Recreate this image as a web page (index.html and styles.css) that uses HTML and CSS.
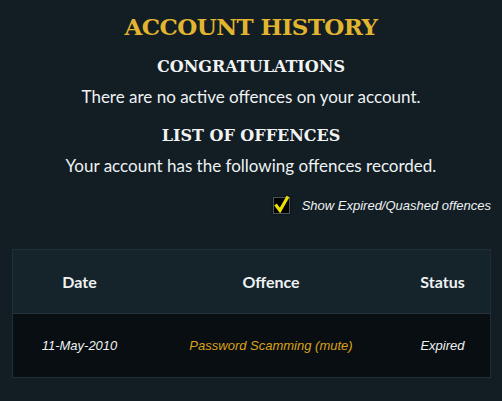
FILE: index.html
```html
<!DOCTYPE html>
<html>
<head>
<meta charset="utf-8">
<link rel="stylesheet" href="styles.css">
</head>
<body>
<main class="page">
  <h1 class="title">Account History</h1>
  <h2 class="subtitle">Congratulations</h2>
  <p class="text">There are no active offences on your account.</p>
  <h2 class="subtitle second">List of Offences</h2>
  <p class="text">Your account has the following offences recorded.</p>
  <label class="toggle">
    <span class="box">
      <svg width="18" height="18" viewBox="0 0 18 18"><path d="M2.5 9.5 L7 15.5 L15 1.5" fill="none" stroke="#e8e000" stroke-width="3.2" stroke-linejoin="miter"/></svg>
    </span>
    <span class="toggle-label">Show Expired/Quashed offences</span>
  </label>
  <table class="offences">
    <thead>
      <tr><th class="c-date">Date</th><th class="c-off">Offence</th><th class="c-stat">Status</th></tr>
    </thead>
    <tbody>
      <tr><td>11-May-2010</td><td class="offence">Password Scamming (mute)</td><td>Expired</td></tr>
    </tbody>
  </table>
</main>
</body>
</html>
```
FILE: styles.css
```css
html, body {
  margin: 0;
  padding: 0;
  background: #121d24;
}
.page {
  width: 502px;
  height: 401px;
  box-sizing: border-box;
  padding-top: 11px;
  display: flex;
  flex-direction: column;
  align-items: center;
  color: #eef2f3;
  font-family: Lato, "Noto Sans", sans-serif;
}
.title {
  margin: 0;
  font-family: "DejaVu Serif", serif;
  font-weight: bold;
  text-transform: uppercase;
  font-size: 23px;
  line-height: 32px;
  color: #e2b530;
  letter-spacing: -0.6px;
}
.subtitle {
  margin: 14px 0 0;
  font-family: "DejaVu Serif", serif;
  font-weight: bold;
  text-transform: uppercase;
  font-size: 16px;
  line-height: 20px;
  color: #f1f3f3;
}
.subtitle.second {
  margin-top: 18px;
}
.text {
  margin: 9px 0 0;
  font-size: 17px;
  line-height: 22px;
}
.toggle {
  align-self: flex-end;
  margin: 20px 11px 0 0;
  display: flex;
  align-items: center;
  gap: 12px;
}
.box {
  width: 15px;
  height: 15px;
  background: #000;
  border: 1px solid #4c555a;
  display: flex;
  align-items: center;
  justify-content: center;
  box-shadow: 0 0 2px rgba(0,0,0,0.6);
}
.box svg {
  margin-top: -3px;
  margin-left: 1px;
  flex: none;
}
.toggle-label {
  font-family: "Liberation Sans", Arial, sans-serif;
  font-style: italic;
  font-size: 13px;
  color: #eef2f3;
}
.offences {
  margin-top: 35px;
  width: 479px;
  border-collapse: collapse;
  border: 1px solid #1f2d35;
}
.offences th {
  background: #15232b;
  height: 63px;
  font-size: 16px;
  font-weight: bold;
  color: #eef2f3;
  padding: 0;
  border-bottom: 1px solid #24333b;
}
.c-date { width: 134px; }
.c-stat { width: 94px; }
.offences td {
  background: #080e11;
  height: 63px;
  padding: 0;
  text-align: center;
  font-family: "Liberation Sans", Arial, sans-serif;
  font-style: italic;
  font-size: 13px;
  color: #eef2f3;
}
.offences td.offence {
  color: #dca21a;
}
```
